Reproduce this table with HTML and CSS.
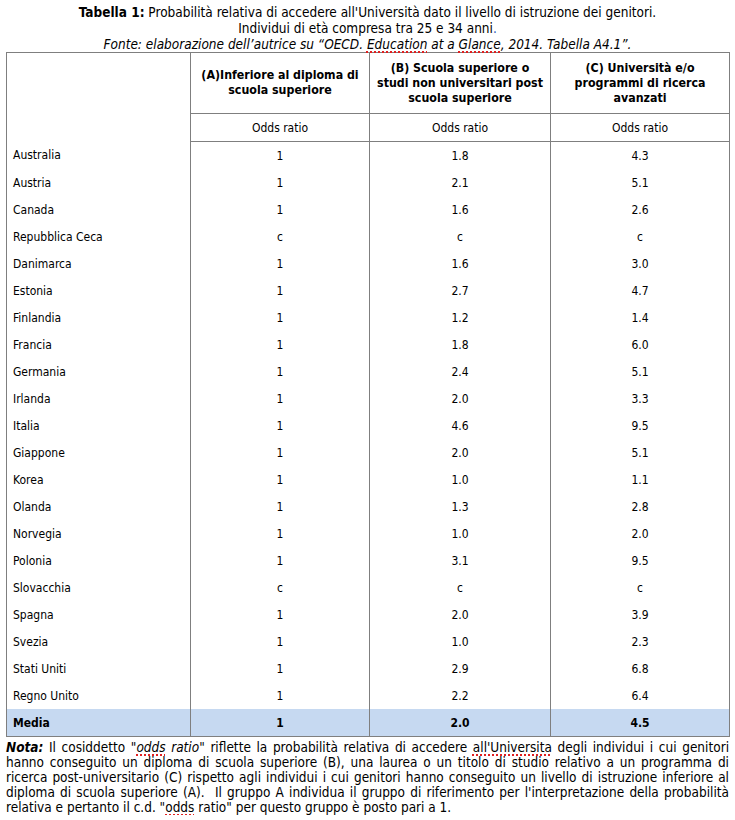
FILE: index.html
```html
<!DOCTYPE html>
<html lang="it">
<head>
<meta charset="utf-8">
<link rel="stylesheet" href="styles.css">
</head>
<body>
<div class="page">
  <div class="caption">
    <div><b>Tabella 1:</b> Probabilità relativa di accedere all'Università dato il livello di istruzione dei genitori.</div>
    <div>Individui di età compresa tra 25 e 34 anni<span class="blue">.</span></div>
    <div class="it">Fonte: elaborazione dell’autrice su “OECD. <span class="sq">Education</span> at a <span class="sq">Glance</span>, 2014. Tabella A4.1”.</div>
  </div>
  <table class="tbl">
    <colgroup>
      <col class="c1"><col class="c2"><col class="c3"><col class="c4">
    </colgroup>
    <tbody>
      <tr class="head">
        <td class="country" rowspan="2"></td>
        <th>(A)Inferiore al diploma di scuola superiore</th>
        <th>(B) Scuola superiore o studi non universitari post scuola superiore</th>
        <th>(C) Università e/o programmi di ricerca avanzati</th>
      </tr>
      <tr class="odds">
        <td>Odds ratio</td><td>Odds ratio</td><td>Odds ratio</td>
      </tr>
      <tr class="first"><td class="country">Australia</td><td>1</td><td>1.8</td><td>4.3</td></tr>
      <tr><td class="country">Austria</td><td>1</td><td>2.1</td><td>5.1</td></tr>
      <tr><td class="country">Canada</td><td>1</td><td>1.6</td><td>2.6</td></tr>
      <tr><td class="country">Repubblica Ceca</td><td>c</td><td>c</td><td>c</td></tr>
      <tr><td class="country">Danimarca</td><td>1</td><td>1.6</td><td>3.0</td></tr>
      <tr><td class="country">Estonia</td><td>1</td><td>2.7</td><td>4.7</td></tr>
      <tr><td class="country">Finlandia</td><td>1</td><td>1.2</td><td>1.4</td></tr>
      <tr><td class="country">Francia</td><td>1</td><td>1.8</td><td>6.0</td></tr>
      <tr><td class="country">Germania</td><td>1</td><td>2.4</td><td>5.1</td></tr>
      <tr><td class="country">Irlanda</td><td>1</td><td>2.0</td><td>3.3</td></tr>
      <tr><td class="country">Italia</td><td>1</td><td>4.6</td><td>9.5</td></tr>
      <tr><td class="country">Giappone</td><td>1</td><td>2.0</td><td>5.1</td></tr>
      <tr><td class="country">Korea</td><td>1</td><td>1.0</td><td>1.1</td></tr>
      <tr><td class="country">Olanda</td><td>1</td><td>1.3</td><td>2.8</td></tr>
      <tr><td class="country">Norvegia</td><td>1</td><td>1.0</td><td>2.0</td></tr>
      <tr><td class="country">Polonia</td><td>1</td><td>3.1</td><td>9.5</td></tr>
      <tr><td class="country">Slovacchia</td><td>c</td><td>c</td><td>c</td></tr>
      <tr><td class="country">Spagna</td><td>1</td><td>2.0</td><td>3.9</td></tr>
      <tr><td class="country">Svezia</td><td>1</td><td>1.0</td><td>2.3</td></tr>
      <tr><td class="country">Stati Uniti</td><td>1</td><td>2.9</td><td>6.8</td></tr>
      <tr><td class="country">Regno Unito</td><td>1</td><td>2.2</td><td>6.4</td></tr>
      <tr class="media"><td class="country">Media</td><td>1</td><td>2.0</td><td>4.5</td></tr>
    </tbody>
  </table>
  <div class="note">
    <span class="ln"><b class="it">Nota:</b> Il cosiddetto "<span class="it"><span class="sq">odds</span> ratio</span>" riflette la probabilità relativa di accedere <span class="sq">all'Universita</span> degli individui i cui genitori</span>
    <span class="ln">hanno conseguito un diploma di scuola superiore (B), una laurea o un titolo di studio relativo a un programma di</span>
    <span class="ln">ricerca post-universitario (C) rispetto agli individui i cui genitori hanno conseguito un livello di istruzione inferiore al</span>
    <span class="ln">diploma di scuola superiore (A).&nbsp; Il gruppo A individua il gruppo di riferimento per l'interpretazione della probabilità</span>
    <span class="ln last">relativa e pertanto il c.d. "<span class="sq">odds</span> ratio" per questo gruppo è posto pari a 1.</span>
  </div>
</div>
</body>
</html>
```
FILE: styles.css
```css
html, body {
  margin: 0;
  padding: 0;
  background: #ffffff;
}
body {
  font-family: "DejaVu Sans Condensed", "DejaVu Sans", sans-serif;
  font-size: 12px;
  color: #000000;
}
.page {
  width: 723px;
  padding: 4px 6px 0 6px;
}
.caption {
  text-align: center;
  font-size: 13.5px;
  line-height: 16px;
  margin-bottom: 0;
}
.it { font-style: italic; }
.blue { color: #2e5cb8; }
.sq {
  text-decoration: underline dotted #e02020;
  text-decoration-thickness: 2px;
  text-underline-offset: 2px;
}
.tbl {
  width: 723px;
  border-collapse: collapse;
  table-layout: fixed;
  border: 1px solid #7f7f7f;
}
.c1 { width: 184px; }
.c2 { width: 179px; }
.c3 { width: 181px; }
.c4 { width: 179px; }
.tbl td, .tbl th {
  border-left: 1px solid #7f7f7f;
  border-right: 1px solid #7f7f7f;
  padding: 0 6px;
  text-align: center;
  vertical-align: middle;
}
.tbl th {
  font-weight: bold;
  font-size: 12.3px;
  line-height: 15px;
  height: 60px;
  border-bottom: 1px solid #7f7f7f;
}
.tbl .odds td {
  height: 27px;
  border-bottom: 1px solid #7f7f7f;
}
.tbl tr td {
  height: 27px;
}
.tbl td.country {
  text-align: left;
  padding-left: 6px;
}
.tbl .media td {
  background: #c6d9f1;
  font-weight: bold;
  border-bottom: 1px solid #7f7f7f;
}
.note {
  font-size: 13.5px;
  padding-top: 3px;
  line-height: 15px;
}
.note .ln {
  display: block;
  text-align: justify;
  text-align-last: justify;
  white-space: nowrap;
}
.note .ln.last {
  text-align-last: left;
}
```
